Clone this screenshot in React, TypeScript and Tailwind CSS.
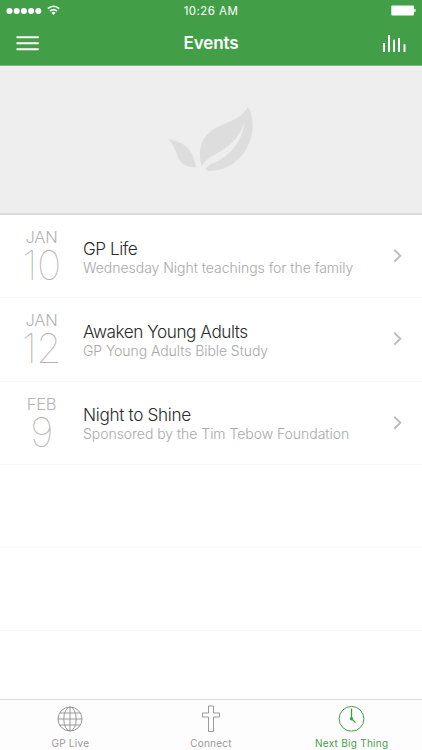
import type { ReactNode } from 'react';

type EventItem = { month: string; day: string; title: string; subtitle: string; titleClass: string; subtitleClass: string };

const events: EventItem[] = [
  {
    month: 'JAN',
    day: '10',
    title: 'GP Life',
    subtitle: 'Wednesday Night teachings for the family',
    titleClass: 'tracking-[-0.48px]',
    subtitleClass: 'tracking-[-0.03px]',
  },
  {
    month: 'JAN',
    day: '12',
    title: 'Awaken Young Adults',
    subtitle: 'GP Young Adults Bible Study',
    titleClass: 'tracking-[-0.45px]',
    subtitleClass: 'tracking-[-0.07px]',
  },
  {
    month: 'FEB',
    day: '9',
    title: 'Night to Shine',
    subtitle: 'Sponsored by the Tim Tebow Foundation',
    titleClass: 'tracking-[-0.33px]',
    subtitleClass: 'tracking-[-0.04px]',
  },
];

function StatusBar() {
  return (
    <div className="grid h-[22px] grid-cols-3 items-center px-1.5">
      <div className="flex items-center">
        <svg width="56" height="14" viewBox="0 0 56 14" fill="white">
          {[3.5, 10.7, 17.9, 25.1, 32.3].map((cx) => (
            <circle key={cx} cx={cx} cy="7" r="3" />
          ))}
          <g fill="none" stroke="white" strokeWidth="1.6">
            <path d="M41.8 4.7Q47.5 -.2 53.2 4.7" />
            <path d="M44 7.2Q47.5 4.2 51 7.2" />
          </g>
          <path d="M45.5 8.7Q47.5 6.9 49.5 8.7L47.5 11Z" />
        </svg>
      </div>
      <span className="pt-px text-center text-[11.5px] font-normal tracking-[0.45px]">10:26 AM</span>
      <svg className="justify-self-end" width="26" height="12" viewBox="0 0 26 12" fill="white">
        <rect x="1.3" y=".5" width="22.7" height="10" rx="1" />
        <rect x="24.3" y="4" width="1.3" height="3" rx=".5" />
      </svg>
    </div>
  );
}

function Header() {
  return (
    <header className="h-[66px] shrink-0 border-b border-[#87b489] bg-[#439f47] text-white">
      <StatusBar />
      <div className="grid h-[43px] grid-cols-3 items-center px-4">
        <svg width="23" height="16" viewBox="0 0 23 16" stroke="white" strokeWidth="2" strokeLinecap="round">
          <path d="M1.3 1.3H22M1.3 7.3H22M1.3 13.3H22" />
        </svg>
        <h1 className="text-center text-[17px] font-semibold tracking-[-0.1px]">Events</h1>
        <svg className="justify-self-end" width="23" height="17" viewBox="0 0 23 17" stroke="white" strokeWidth="2">
          <path d="M1 8V17M6 0V17M11 4.7V17M16 3V17M21.5 9.3V17" />
        </svg>
      </div>
    </header>
  );
}

function Hero() {
  return (
    <div className="flex h-[149px] shrink-0 justify-center border-b-2 border-[#dcdcdc] bg-[#eeeeee] pt-[29px] pr-[2px]">
      <svg width="120" height="90" viewBox="0 0 360 270" fill="#dddddd">
        <path d="M54 131C64 136 78 137 94 145C120 157 133 184 138 217C119 217 105 213 93 201C80 187 79 157 54 131Z" />
        <path d="M154 214C144 165 151 137 180 111C218 80 267 82 293 37C302 42 308 66 308 96C306 158 259 228 174 228L166 222C176 207 194 205 210 195C246 173 276 138 284 82C264 135 236 157 196 178C177 188 168 194 154 214Z" />
      </svg>
    </div>
  );
}

function EventRow({ month, day, title, subtitle, titleClass, subtitleClass }: EventItem) {
  return (
    <li className="flex h-[83.4px] border-b border-[#f7f7f7]">
      <div className="flex w-[83px] flex-col items-center pt-3 text-[#b4b4b4]">
        <span className="text-[16.5px] leading-5 font-light tracking-[-0.2px]">{month}</span>
        <span className="text-[41px] leading-9 font-thin tracking-[-0.5px]">{day}</span>
      </div>
      <div className="flex-1 pt-[22.6px] whitespace-nowrap">
        <div className={`text-[17.2px] leading-[22px] font-light text-[#2b2b2b] ${titleClass}`}>{title}</div>
        <div className={`-mt-px text-[14px] leading-[17px] font-light text-[#a8a8a8] ${subtitleClass}`}>{subtitle}</div>
      </div>
      <svg className="mt-[34px] mr-5" width="9" height="14" viewBox="0 0 9 14" fill="none" stroke="#bdbdbd" strokeWidth="1.9">
        <path d="M1.2 .7L7.4 6.7L1.2 12.7" />
      </svg>
    </li>
  );
}

function Tab({ label, active, children }: { label: string; active?: boolean; children: ReactNode }) {
  return (
    <div className={`flex flex-1 flex-col items-center pt-[5px] ${active ? 'text-[#439f47]' : 'text-[#999]'}`}>
      <svg width="28" height="28" viewBox="0 0 28 28" fill="none" stroke="currentColor" strokeWidth="1">
        {children}
      </svg>
      <span className="mt-[3px] text-[10px] leading-[14px] tracking-[0.26px] whitespace-nowrap">{label}</span>
    </div>
  );
}

export default function App() {
  return (
    <div className="flex h-[750px] w-[422px] flex-col overflow-hidden bg-white font-['Inter','Liberation_Sans',sans-serif]">
      <Header />
      <Hero />
      <ul className="flex-1">
        {events.map((e) => (
          <EventRow key={e.title} {...e} />
        ))}
        {/* empty table rows */}
        <li className="h-[83px] border-b border-[#f9f9f9]" />
        <li className="h-[83px] border-b border-[#f9f9f9]" />
      </ul>
      <nav className="flex h-[51px] shrink-0 border-t border-[#dedede] bg-[#fdfdfd]">
        <Tab label="GP Live">
          <circle cx="14" cy="14" r="12" />
          <ellipse cx="14" cy="14" rx="6.2" ry="12" />
          <path d="M14 2V26M2 14H26M3.6 8H24.4M3.6 20H24.4" />
        </Tab>
        <Tab label="Connect">
          <path d="M11.5 1H16.5V8H22.5V12H16.5V26.5H11.5V12H5.5V8H11.5Z" />
        </Tab>
        <Tab label="Next Big Thing" active>
          <circle cx="13.5" cy="13.8" r="12.4" />
          <path d="M13.5 3.5V13.8L17.5 17.6" strokeWidth="1.3" />
          <circle cx="13.5" cy="13.8" r="1.7" fill="currentColor" stroke="none" />
        </Tab>
      </nav>
    </div>
  );
}
